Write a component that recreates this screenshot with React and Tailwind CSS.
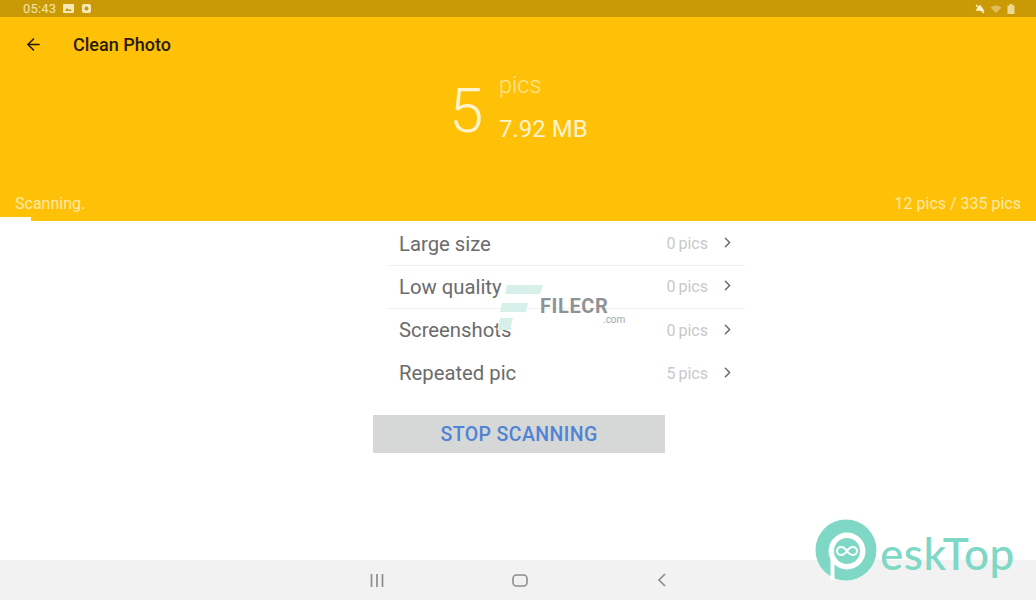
import { ArrowLeft, ChevronRight } from "lucide-react"

const rows = [
    { label: "Large size", count: "0", line: true },
    { label: "Low quality", count: "0", line: true },
    { label: "Screenshots", count: "0", line: false },
    { label: "Repeated pic", count: "5", line: false },
]

const StatusBar = () => (
    <div className="h-[17px] shrink-0 bg-[#c99a06] flex items-center justify-between pl-[23px] pr-[21px] text-[#f3e3a6]">
        <div className="flex items-center">
            <span className="text-[13px] leading-none tracking-[0.2px]">05:43</span>
            <svg className="ml-[7px]" width="11" height="9" viewBox="0 0 11 9">
                <rect width="11" height="9" rx="1" fill="#f6e9b8" />
                <path d="M2 7l2-3 2 2 1-1 2 2z" fill="#c99a06" />
            </svg>
            <svg className="ml-[8px]" width="9" height="9" viewBox="0 0 9 9">
                <rect width="9" height="9" rx="2" fill="#f6e9b8" />
                <circle cx="4.5" cy="4.5" r="2" fill="#c99a06" />
            </svg>
        </div>
        <div className="flex items-center gap-[5px]">
            <svg width="10" height="10" viewBox="0 0 10 10">
                <path d="M1 1l8 8M2 6l3-4 3 4z" stroke="#fbf3d2" strokeWidth="1.5" fill="#fbf3d2" />
            </svg>
            <svg width="12" height="8" viewBox="0 0 11 8">
                <path d="M0 2.5Q5.5-1.5 11 2.5L5.5 8z" fill="#dfbd58" />
            </svg>
            <svg width="8" height="10" viewBox="0 0 8 10">
                <path d="M2.5 0h3v1.5H7.5V10H.5V1.5h2z" fill="#ecd88e" />
            </svg>
        </div>
    </div>
)

const Header = () => (
    <header className="h-[204px] shrink-0 bg-[#ffc107] flex flex-col">
        <div className="h-[55px] flex items-center pl-[24px]">
            <ArrowLeft size={19} strokeWidth={2} className="text-[#2a1a08]" />
            <h1 className="ml-[30px] text-[18px] font-medium text-[#2a1a08]">Clean Photo</h1>
        </div>
        <div className="flex pl-[449px] text-[#fdf3cd]">
            <span className="text-[62px] font-light leading-none mt-[8px] w-[50px]">5</span>
            <div className="flex flex-col">
                <span className="text-[23.5px] font-light leading-none mt-[2px] text-[#ffe595]">pics</span>
                <span className="text-[24px] leading-none mt-[19px]">7.92 MB</span>
            </div>
        </div>
        <div className="mt-auto flex justify-between px-[15px] pb-[3px] text-[16px] leading-[20px] text-[#fdeaa8]">
            <span>Scanning.</span>
            <span>12 pics / 335 pics</span>
        </div>
        <div className="h-[4px] w-[31px] bg-[#fffdf5]" />
    </header>
)

const PhotoRows = () => (
    <div className="ml-[387px] w-[358px] mt-[2px]">
        {rows.map((row) => (
            <div
                key={row.label}
                className={`h-[43px] flex items-center pl-[12px] pr-[9px] ${row.line ? "border-b border-[#f1f1f1]" : ""}`}
            >
                <span className="text-[20.3px] text-[#6b6b6b] flex-1">{row.label}</span>
                <span className="text-[16px] text-[#c9c9c9] mr-[11px]">
                    {row.count}
                    <span className="ml-[3px]">pics</span>
                </span>
                <ChevronRight size={17} strokeWidth={2} className="text-[#666666] -mt-[3px]" />
            </div>
        ))}
    </div>
)

const NavBar = () => (
    <div className="mt-auto h-[40px] shrink-0 bg-[#f2f2f2] flex items-center">
        <svg className="ml-[370px]" width="14" height="13" viewBox="0 0 14 13">
            <path d="M1.5 0v13M7 0v13M12.5 0v13" stroke="#8d8d8d" strokeWidth="1.7" />
        </svg>
        <svg className="ml-[128px]" width="16" height="13" viewBox="0 0 16 13">
            <rect x="1" y="1" width="14" height="11" rx="3.5" fill="none" stroke="#8d8d8d" strokeWidth="1.6" />
        </svg>
        <svg className="ml-[129px]" width="10" height="14" viewBox="0 0 10 14">
            <path d="M8 1L2 7l6 6" fill="none" stroke="#8d8d8d" strokeWidth="1.7" />
        </svg>
    </div>
)

const FilecrMark = () => (
    <div className="absolute left-[497px] top-[284px] w-[130px] h-[46px]">
        <svg className="absolute left-0 top-0" width="46" height="46" viewBox="0 0 46 46">
            <path d="M10 1h36l-3 9H8zM5 19h26l-2 9H3zM3 34h13l-3 12H0z" fill="#d7f0e9" />
        </svg>
        <span className="absolute left-[43px] top-[13px] text-[20px] leading-[18px] font-bold text-[#8f9294] tracking-[0.6px]">FILECR</span>
        <span className="absolute left-[106px] top-[31px] text-[10px] leading-[10px] text-[#a3a6a8]">.com</span>
    </div>
)

const DeskTopMark = () => (
    <div className="absolute left-[815px] top-[519px] flex items-start">
        <svg width="64" height="62" viewBox="0 0 64 62">
            <circle cx="31" cy="31" r="30.5" fill="#7fd8c5" />
            <circle cx="32" cy="32" r="18.5" fill="#ffffff" />
            <rect x="15.5" y="32" width="4" height="29" fill="#ffffff" />
            <circle cx="32" cy="32" r="13" fill="#7fd8c5" />
            <path d="M32 32c-2-3-4-4-6-4a4 4 0 000 8c2 0 4-1 6-4s4-4 6-4a4 4 0 010 8c-2 0-4-1-6-4z" fill="none" stroke="#ffffff" strokeWidth="2" />
        </svg>
        <span className="text-[44px] leading-[44px] mt-[12px] ml-[1px] font-medium font-['Lato',sans-serif] text-[#7fd8c5] tracking-[0.5px]">eskTop</span>
    </div>
)

export default function App() {
    return (
        <div className="relative w-[1036px] h-[600px] flex flex-col overflow-hidden bg-white font-['Roboto',sans-serif]">
            <StatusBar />
            <Header />
            <PhotoRows />
            <button className="ml-[373px] mt-[20px] w-[292px] h-[38px] pt-[2px] bg-[#d6d7d7] text-[19.5px] font-medium tracking-[0.4px] text-[#4f83d4]">
                STOP SCANNING
            </button>
            <NavBar />
            <FilecrMark />
            <DeskTopMark />
        </div>
    )
}
